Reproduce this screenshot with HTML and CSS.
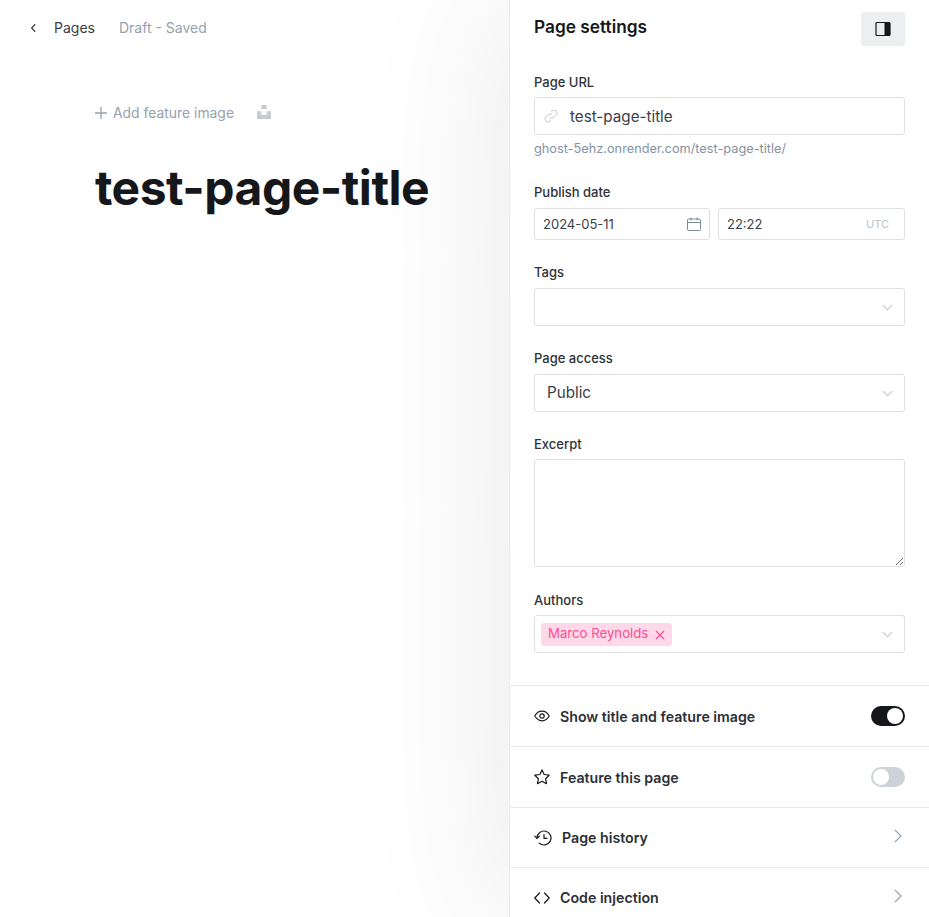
FILE: index.html

```html
<!DOCTYPE html>
<html>
<head>
    <title>Page settings</title>
    <meta charset="utf-8" />
    <link rel="stylesheet" href="styles.css">
</head>
<body>

<div class="editor">
    <div class="topbar">
        <svg class="back" viewBox="0 0 8 12"><path d="M6 1.500 1.800 6 6 10.500" /></svg>
        <span class="crumb">Pages</span>
        <span class="status">Draft - Saved</span>
    </div>
    <div class="feature">
        <svg class="plus" viewBox="0 0 12 12"><path d="M6 0v12M0 6h12" /></svg>
        <span class="feature-text">Add feature image</span>
        <svg class="unsplash" viewBox="0 0 32 32"><path d="M10 9V0h12v9H10zm12 5h10v18H0V14h10v9h12v-9z" /></svg>
    </div>
    <h1 class="title">test-page-title</h1>
</div>

<div class="settings">
    <div class="settings-form">
        <div class="settings-head">
            <h4 class="settings-title">Page settings</h4>
            <button class="toggle-panel">
                <svg viewBox="0 0 16 16"><rect class="panel-frame" x="1" y="1.500" width="14" height="13" rx="1" /><rect class="panel-side" x="9.500" y="1.500" width="5.500" height="13" /></svg>
            </button>
        </div>

        <div class="field first">
            <div class="label tight">Page URL</div>
            <div class="box url">
                <svg class="link" viewBox="0 0 24 24"><path d="M10 14a5 5 0 0 0 7 0l4-4a5 5 0 0 0-7-7l-2 2" /><path d="M14 10a5 5 0 0 0-7 0l-4 4a5 5 0 0 0 7 7l2-2" /></svg>
                <span>test-page-title</span>
            </div>
            <div class="hint">ghost-5ehz.onrender.com/test-page-title/</div>
        </div>

        <div class="field date-field">
            <div class="label">Publish date</div>
            <div class="date-row">
                <div class="box small date">
                    <span>2024-05-11</span>
                    <svg class="calendar" viewBox="0 0 14 14"><rect x="0.500" y="2" width="13" height="11.500" rx="1" /><path d="M0.500 5.500h13M4 0.500v3M10 0.500v3" /></svg>
                </div>
                <div class="box small time">
                    <span>22:22</span>
                    <span class="utc">UTC</span>
                </div>
            </div>
        </div>

        <div class="field">
            <div class="label">Tags</div>
            <div class="box select">
                <span></span>
                <svg class="chevron" viewBox="0 0 12 7"><path d="M1 1l5 5 5-5" /></svg>
            </div>
        </div>

        <div class="field">
            <div class="label">Page access</div>
            <div class="box select access">
                <span>Public</span>
                <svg class="chevron" viewBox="0 0 12 7"><path d="M1 1l5 5 5-5" /></svg>
            </div>
        </div>

        <div class="field">
            <div class="label tight">Excerpt</div>
            <textarea class="box excerpt"></textarea>
        </div>

        <div class="field authors-field">
            <div class="label tight">Authors</div>
            <div class="box select authors">
                <span class="author">Marco Reynolds
                    <svg class="remove" viewBox="0 0 10 10"><path d="M1 1l8 8M9 1l-8 8" /></svg>
                </span>
                <svg class="chevron" viewBox="0 0 12 7"><path d="M1 1l5 5 5-5" /></svg>
            </div>
        </div>
    </div>

    <ul class="rows">
        <li class="row">
            <svg class="icon" viewBox="0 0 16 16"><path d="M.8 8S3.400 3.200 8 3.200 15.200 8 15.200 8 12.600 12.800 8 12.800.8 8 .8 8z" /><circle cx="8" cy="8" r="2.200" /></svg>
            <span class="row-text">Show title and feature image</span>
            <span class="switch on"></span>
        </li>
        <li class="row">
            <svg class="icon" viewBox="0 0 16 16"><path d="M8 .9l2.200 4.600 5 .7-3.600 3.500.9 5L8 12.300l-4.500 2.400.9-5L.8 6.200l5-.7z" /></svg>
            <span class="row-text">Feature this page</span>
            <span class="switch"></span>
        </li>
        <li class="row short">
            <svg class="icon history" viewBox="0 0 18 16"><path d="M3 8a7 7 0 1 1 2.200 5.100" /><path d="M.8 6.200 3 8.400l2.300-2.200" /><path d="M10 4.500V8.300h3" /></svg>
            <span class="row-text">Page history</span>
            <svg class="arrow" viewBox="0 0 8 14"><path d="M1 1l6 6-6 6" /></svg>
        </li>
        <li class="row short">
            <svg class="icon" viewBox="0 0 16 16"><path d="M5.500 3 .8 8l4.700 5M10.500 3l4.700 5-4.700 5" /></svg>
            <span class="row-text">Code injection</span>
            <svg class="arrow" viewBox="0 0 8 14"><path d="M1 1l6 6-6 6" /></svg>
        </li>
    </ul>
</div>

</body>
</html>
```

FILE: styles.css

```css
html, body {
    margin: 0;
    height: 917px;
    overflow: hidden;
}

body {
    display: flex;
    background: #fff;
    color: #15171a;
    font-family: Inter, sans-serif;
    font-size: 13px;
}

svg {
    display: block;
    flex: none;
}

/* left side */
.editor {
    width: 509px;
    flex: none;
}

.topbar {
    display: flex;
    align-items: center;
    height: 16px;
    padding: 19px 0 0 30px;
    font-size: 14px;
}

.back {
    width: 7px;
    height: 10px;
    margin-top: 2px;
    fill: none;
    stroke: #394047;
    stroke-width: 1.5;
}

.crumb {
    margin-left: 17px;
    color: #394047;
}

.status {
    margin-left: 24px;
    color: #95a1ad;
}

.feature {
    display: flex;
    align-items: center;
    height: 18px;
    margin: 69px 0 0 95px;
    color: #95a1ad;
    font-size: 13.900px;
}

.plus {
    width: 12px;
    height: 12px;
    fill: none;
    stroke: #95a1ad;
    stroke-width: 1.3;
}

.feature-text {
    margin-left: 6px;
}

.unsplash {
    width: 14px;
    height: 14px;
    margin: -2px 0 0 23px;
    fill: #c5ccd3;
}

.title {
    margin: 38px 0 0 95px;
    font-size: 48px;
    line-height: 56px;
    font-weight: 700;
    letter-spacing: -0.5px;
    white-space: nowrap;
}

/* settings panel */
.settings {
    position: relative;
    width: 419px;
    flex: none;
    background: #fff;
    border-left: 1px solid #ececec;
    box-shadow: 0 0 150px rgba(0, 0, 0, 0.1);
}

.settings-form {
    padding: 12px 24px 32px;
}

.settings-head {
    display: flex;
    justify-content: space-between;
    height: 34px;
}

.settings-title {
    margin: 0;
    font-size: 17.300px;
    line-height: 30px;
    font-weight: 600;
}

.toggle-panel {
    display: flex;
    align-items: center;
    justify-content: center;
    width: 44px;
    height: 34px;
    padding: 0;
    border: 0;
    border-radius: 3px;
    background: #eceef0;
}

.toggle-panel svg {
    width: 16px;
    height: 16px;
}

.panel-frame {
    fill: none;
    stroke: #15171a;
    stroke-width: 1.2;
}

.panel-side {
    fill: #15171a;
}

.field {
    margin-top: 24px;
}

.first {
    margin-top: 28px;
}

.date-field {
    margin-top: 27px;
}

.authors-field {
    margin-top: 25px;
}

.label {
    height: 16px;
    margin-bottom: 8px;
    font-size: 13px;
    line-height: 16px;
    font-weight: 500;
    color: #2d3238;
}

.tight {
    margin-bottom: 7px;
}

.box {
    display: flex;
    align-items: center;
    box-sizing: border-box;
    width: 100%;
    height: 38px;
    background: #fff;
    border: 1px solid #dddfe1;
    border-radius: 3px;
    color: #394047;
    font-family: Inter, sans-serif;
    font-size: 15.200px;
}

.url {
    padding-left: 9px;
}

.link {
    width: 14px;
    height: 14px;
    margin-right: 12px;
    fill: none;
    stroke: #d4d8dc;
    stroke-width: 2;
}

.hint {
    margin-top: 6px;
    font-size: 12.750px;
    line-height: 16px;
    color: #8593a1;
}

.date-row {
    display: flex;
    gap: 8px;
}

.small {
    height: 32px;
    justify-content: space-between;
    font-size: 13px;
}

.date {
    width: 176px;
    flex: none;
    padding: 0 8px;
}

.time {
    padding: 0 15px 0 8px;
}

.calendar {
    width: 14px;
    height: 14px;
    fill: none;
    stroke: #7c8b9a;
    stroke-width: 1;
}

.utc {
    font-size: 11px;
    color: #bcc3ca;
}

.select {
    justify-content: space-between;
    padding-right: 11px;
}

.access {
    padding-left: 12px;
}

.access span {
    margin-top: -1px;
}

.chevron {
    width: 11px;
    height: 7px;
    fill: none;
    stroke: #bcc3ca;
    stroke-width: 1.1;
}

.excerpt {
    display: block;
    height: 108px;
    margin: 0;
    padding: 8px 12px;
    outline: none;
}

.authors {
    padding-left: 6px;
}

.author {
    display: flex;
    align-items: center;
    box-sizing: border-box;
    height: 23px;
    padding: 0 7px 2px;
    background: #ffd9e8;
    border-radius: 3px;
    color: #fb4d94;
    font-size: 13.200px;
}

.remove {
    width: 10px;
    height: 10px;
    margin: 4px 0 0 7px;
    fill: none;
    stroke: #fb4d94;
    stroke-width: 1.2;
}

/* rows under the form */
.rows {
    margin: 0;
    padding: 0;
    list-style: none;
}

.row {
    display: flex;
    align-items: center;
    box-sizing: border-box;
    height: 61px;
    padding: 0 24px;
    border-top: 1px solid #e6e8ea;
}

.short {
    height: 60px;
}

.icon {
    width: 16px;
    height: 16px;
    margin-right: 10px;
    fill: none;
    stroke: #15171a;
    stroke-width: 1.2;
    stroke-linejoin: round;
    stroke-linecap: round;
}

.history {
    width: 18px;
}

.row-text {
    flex: 1;
    font-size: 14.200px;
    font-weight: 600;
    color: #2b3036;
}

.switch {
    position: relative;
    box-sizing: border-box;
    width: 34px;
    height: 20px;
    background: #cdd2d8;
    border-radius: 10px;
}

.switch::after {
    content: "";
    position: absolute;
    top: 2px;
    left: 2px;
    width: 16px;
    height: 16px;
    border-radius: 50%;
    background: #fff;
}

.switch.on {
    background: #15171a;
}

.switch.on::after {
    left: 16px;
}

.arrow {
    width: 8px;
    height: 14px;
    margin: -4px 3px 0 0;
    fill: none;
    stroke: #95a1ad;
    stroke-width: 1.1;
}
```
